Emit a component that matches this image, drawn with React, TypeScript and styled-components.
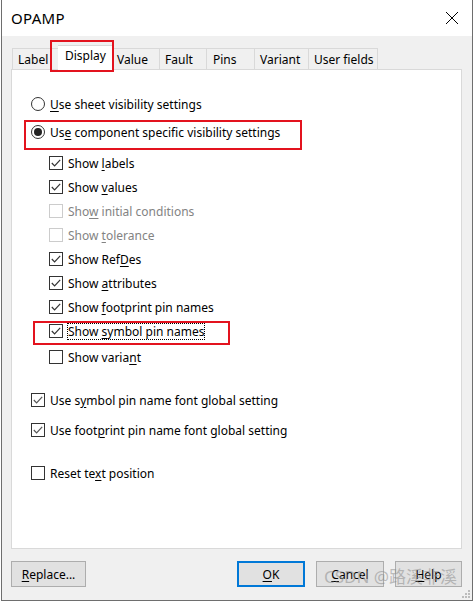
import React from 'react';
import styled, { createGlobalStyle } from 'styled-components';

const GlobalStyle = createGlobalStyle`
  html, body {
    margin: 0;
    padding: 0;
    background: #ffffff;
  }
  body {
    font-family: "Noto Sans", "Open Sans", sans-serif;
    font-size: 12px;
    color: #000;
  }
`;

const Window = styled.div`
  position: relative;
  box-sizing: border-box;
  width: 472px;
  height: 601px;
  margin-left: 1px;
  background: #f0f0f0;
  border: 1px solid #6e6e6e;
  border-top: none;
  display: flex;
  flex-direction: column;
`;

const TitleBar = styled.div`
  height: 36px;
  flex: none;
  background: #ffffff;
  display: flex;
  align-items: center;
  justify-content: space-between;
  padding: 0 13px 0 9px;
`;

const Title = styled.span`
  font-size: 15px;
  letter-spacing: 0.3px;
  margin-top: -1px;
`;

const CloseButton = styled.button`
  border: none;
  background: transparent;
  padding: 0;
  width: 14px;
  height: 14px;
  display: flex;
  margin-top: -1px;
`;

const Body = styled.div`
  flex: 1;
  display: flex;
  flex-direction: column;
  padding: 9px 10px 0 9px;
`;

const TabRow = styled.div`
  display: flex;
  align-items: flex-end;
  height: 24px;
  padding-left: 1px;
  position: relative;
  z-index: 1;
`;

const Tab = styled.div<{ $active?: boolean; $w: number; $pad?: number }>`
  position: relative;
  box-sizing: border-box;
  width: ${p => p.$w + (p.$active ? 4 : 0)}px;
  height: ${p => (p.$active ? 25 : 21)}px;
  margin: ${p => (p.$active ? '0 -2px -1px -2px' : '0')};
  padding: ${p => (p.$active ? '1px 0 0 7px' : `2px 0 0 ${p.$pad ?? 5}px`)};
  background: ${p => (p.$active ? '#ffffff' : '#f0f0f0')};
  border: 1px solid #d9d9d9;
  border-bottom: none;
  z-index: ${p => (p.$active ? 2 : 0)};
  white-space: nowrap;
  font-size: 12px;
  line-height: 17px;

  & + & {
    border-left: ${p => (p.$active ? '1px solid #d9d9d9' : 'none')};
  }
`;

const Highlight = styled.span<{ $l: number; $t: number; $w: number; $h: number }>`
  position: absolute;
  left: ${p => p.$l}px;
  top: ${p => p.$t}px;
  width: ${p => p.$w}px;
  height: ${p => p.$h}px;
  box-sizing: border-box;
  border: 2px solid #e3131e;
  pointer-events: none;
`;

const Panel = styled.div`
  box-sizing: border-box;
  height: 480px;
  background: #ffffff;
  border: 1px solid #d9d9d9;
  padding: 22px 0 0 19px;
  display: flex;
  flex-direction: column;
`;

const Row = styled.div<{ $gap?: number; $disabled?: boolean }>`
  position: relative;
  height: 24px;
  display: flex;
  align-items: center;
  gap: 5px;
  margin-top: ${p => p.$gap ?? 0}px;
  color: ${p => (p.$disabled ? '#838383' : '#000')};
  white-space: nowrap;
`;

const SubList = styled.div`
  display: flex;
  flex-direction: column;
  padding-left: 18px;
  margin-top: 7px;
`;

const RadioCircle = styled.span<{ $on?: boolean }>`
  box-sizing: border-box;
  width: 14px;
  height: 14px;
  border-radius: 50%;
  border: 1px solid #333;
  background: #fff;
  display: flex;
  align-items: center;
  justify-content: center;
  flex: none;

  &::after {
    content: "";
    display: ${p => (p.$on ? 'block' : 'none')};
    width: 8px;
    height: 8px;
    border-radius: 50%;
    background: #222;
  }
`;

const Box = styled.span<{ $disabled?: boolean }>`
  box-sizing: border-box;
  width: 14px;
  height: 14px;
  border: 1px solid ${p => (p.$disabled ? '#cccccc' : '#333333')};
  background: #fff;
  display: flex;
  flex: none;
`;

const Label = styled.span<{ $focus?: boolean }>`
  outline: ${p => (p.$focus ? '1px dotted #000' : 'none')};
  outline-offset: 0;
  line-height: 15px;
`;

const Key = styled.span`
  text-decoration: underline;
  text-underline-offset: 2px;
  text-decoration-thickness: 1px;
`;

const ButtonRow = styled.div`
  display: flex;
  align-items: center;
  margin-top: 12px;
  gap: 11px;
`;

const Spacer = styled.div`
  flex: 1;
`;

const Button = styled.button<{ $w: number; $default?: boolean }>`
  box-sizing: border-box;
  width: ${p => p.$w}px;
  height: 26px;
  padding: 0;
  background: #e1e1e1;
  border: ${p => (p.$default ? '2px solid #0078d7' : '1px solid #adadad')};
  font-family: "Noto Sans", "Open Sans", sans-serif;
  font-size: 12px;
  color: #000;
`;

const Watermark = styled.span`
  position: absolute;
  left: 322px;
  top: 563px;
  font-family: "Noto Sans", "Noto Sans CJK SC", sans-serif;
  font-size: 17px;
  color: rgba(140, 140, 140, 0.55);
  white-space: nowrap;
  pointer-events: none;
`;

const Grip = styled.svg`
  position: absolute;
  right: 1px;
  bottom: 1px;
`;

const Check = ({ light }: { light?: boolean }) => (
  <svg width="12" height="12" viewBox="0 0 12 12">
    <polyline
      points="1.8,6 4.6,8.8 10.2,2.8"
      fill="none"
      stroke={light ? '#555' : '#333'}
      strokeWidth="1.2"
    />
  </svg>
);

type Item = {
  text: React.ReactNode;
  checked: boolean;
  disabled?: boolean;
  gap?: number;
  focus?: boolean;
  highlight?: boolean;
};

const items: Item[] = [
  { text: <>Show <Key>l</Key>abels</>, checked: true },
  { text: <>Show <Key>v</Key>alues</>, checked: true },
  { text: <>Sho<Key>w</Key> initial conditions</>, checked: false, disabled: true },
  { text: <>Show <Key>t</Key>olerance</>, checked: false, disabled: true },
  { text: <>Show Ref<Key>D</Key>es</>, checked: true },
  { text: <>Show <Key>a</Key>ttributes</>, checked: true },
  { text: <>Show <Key>f</Key>ootprint pin names</>, checked: true },
  { text: <>Show <Key>s</Key>ymbol pin names</>, checked: true, focus: true, highlight: true },
  { text: <>Show varia<Key>n</Key>t</>, checked: false, gap: 2 },
];

const tabs = [
  { name: 'Label', w: 48, pad: 5 },
  { name: 'Display', w: 51, active: true },
  { name: 'Value', w: 49, pad: 6 },
  { name: 'Fault', w: 47, pad: 5 },
  { name: 'Pins', w: 48, pad: 6 },
  { name: 'Variant', w: 54, pad: 5 },
  { name: 'User fields', w: 69, pad: 5 },
];

const CheckRow = ({ item }: { item: Item }) => (
  <Row $gap={item.gap} $disabled={item.disabled}>
    {item.highlight && <Highlight $l={-16} $t={2} $w={197} $h={24} />}
    <Box $disabled={item.disabled}>{item.checked && <Check />}</Box>
    <Label $focus={item.focus}>{item.text}</Label>
  </Row>
);

export default function App() {
  return (
    <>
      <GlobalStyle />
      <Window>
        <TitleBar>
          <Title>OPAMP</Title>
          <CloseButton aria-label="Close">
            <svg width="14" height="14" viewBox="0 0 14 14">
              <path d="M1 1 L13 13 M13 1 L1 13" stroke="#000" strokeWidth="1" fill="none" />
            </svg>
          </CloseButton>
        </TitleBar>
        <Body>
          <TabRow>
            {tabs.map(t => (
              <Tab key={t.name} $w={t.w} $active={t.active} $pad={t.pad}>
                {t.active && <Highlight $l={-8} $t={-6} $w={64} $h={32} />}
                {t.name}
              </Tab>
            ))}
          </TabRow>
          <Panel>
            <Row>
              <RadioCircle />
              <Label><Key>U</Key>se sheet visibility settings</Label>
            </Row>
            <Row $gap={4}>
              <Highlight $l={-7} $t={0} $w={278} $h={30} />
              <RadioCircle $on />
              <Label>Us<Key>e</Key> component specific visibility settings</Label>
            </Row>
            <SubList>
              {items.map((it, i) => (
                <CheckRow key={i} item={it} />
              ))}
            </SubList>
            <Row $gap={19}>
              <Box><Check light /></Box>
              <Label>Use s<Key>y</Key>mbol pin name font global setting</Label>
            </Row>
            <Row $gap={6}>
              <Box><Check light /></Box>
              <Label>Use foot<Key>p</Key>rint pin name font global setting</Label>
            </Row>
            <Row $gap={19}>
              <Box />
              <Label>Reset te<Key>x</Key>t position</Label>
            </Row>
          </Panel>
          <ButtonRow>
            <Button $w={75}><Key>R</Key>eplace...</Button>
            <Spacer />
            <Button $w={68} $default><Key>O</Key>K</Button>
            <Button $w={68}><Key>C</Key>ancel</Button>
            <Button $w={67}><Key>H</Key>elp</Button>
          </ButtonRow>
        </Body>
        <Watermark>CSDN @路溪非溪</Watermark>
        <Grip width="10" height="10" viewBox="0 0 10 10">
          {[[8, 2], [5, 5], [8, 5], [2, 8], [5, 8], [8, 8]].map(([x, y], i) => (
            <rect key={i} x={x - 1} y={y - 1} width="2" height="2" fill="#bcbcbc" />
          ))}
        </Grip>
      </Window>
    </>
  );
}
